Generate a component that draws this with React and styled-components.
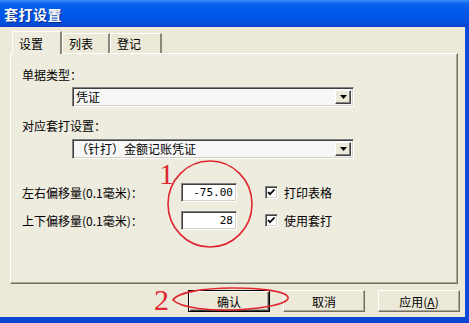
import React from "react";
import styled, { createGlobalStyle } from "styled-components";

const GlobalStyle = createGlobalStyle`
  html, body {
    margin: 0;
    padding: 0;
    background: #ECE9D8;
  }
  body {
    font-family: "Noto Sans CJK SC", "Liberation Sans", sans-serif;
    font-size: 12px;
    color: #000;
  }
`;

const Window = styled.div`
  position: relative;
  width: 469px;
  height: 323px;
  display: flex;
  flex-direction: column;
  overflow: hidden;
`;

const TitleBar = styled.div`
  flex: none;
  height: 27px;
  box-sizing: border-box;
  display: flex;
  align-items: center;
  padding-left: 4px;
  background: linear-gradient(
    to bottom,
    #3C8EF8 0%,
    #0D63EE 14%,
    #0058EA 45%,
    #0052E0 80%,
    #0A42C8 100%
  );
  color: #fff;
  font-weight: bold;
  font-size: 14px;
  letter-spacing: 0.5px;
  text-shadow: 1px 1px #0A2A8A;
`;

const Body = styled.div`
  flex: 1;
  display: flex;
  flex-direction: column;
  padding: 4px 7px 5px 10px;
  background: #ECE9D8;
  border-right: 4px solid #0B4ADB;
  border-bottom: 6px solid #0A46D4;
`;

const TabStrip = styled.div`
  display: flex;
  align-items: flex-end;
  height: 22px;
  padding-left: 2px;
  position: relative;
  z-index: 1;
`;

const Tab = styled.div`
  box-sizing: border-box;
  width: ${(p) => p.$w}px;
  height: ${(p) => (p.$active ? 23 : 20)}px;
  margin-bottom: ${(p) => (p.$active ? -1 : 0)}px;
  display: flex;
  align-items: center;
  padding-left: 6px;
  background: ${(p) => (p.$active ? "#EEEBDF" : "#ECE9D8")};
  border-left: 1px solid #fff;
  border-top: 1px solid #fff;
  border-right: 2px solid #8A877A;
`;

const Panel = styled.div`
  box-sizing: border-box;
  height: 231px;
  display: flex;
  flex-direction: column;
  padding: 14px 0 0 11px;
  background: #EEEBDF;
  border: 1px solid;
  border-color: #fff #716F64 #716F64 #fff;
  box-shadow: inset -1px -1px #ACA899;
`;

const Label = styled.div`
  height: 14px;
  line-height: 14px;
  margin-top: ${(p) => p.$mt || 0}px;
`;

const Combo = styled.div`
  box-sizing: border-box;
  width: 282px;
  height: 20px;
  margin: ${(p) => p.$mt}px 0 0 50px;
  display: flex;
  align-items: stretch;
  padding: 2px;
  background: #F7F7F7;
  border: 1px solid;
  border-color: #808080 #fff #fff #808080;
  box-shadow: inset 1px 1px #404040, inset -1px -1px #D4D0C8;
`;

const ComboText = styled.div`
  flex: 1;
  line-height: 14px;
  padding-left: 1px;
`;

const DropButton = styled.div`
  box-sizing: border-box;
  width: 16px;
  display: flex;
  align-items: center;
  justify-content: center;
  background: #ECE9D8;
  border: 1px solid;
  border-color: #fff #404040 #404040 #fff;
  box-shadow: inset -1px -1px #808080;
`;

const Row = styled.div`
  display: flex;
  align-items: center;
  height: 19px;
  margin-top: ${(p) => p.$mt}px;
`;

const RowLabel = styled.div`
  width: 159px;
  line-height: 14px;
`;

const NumBox = styled.div`
  box-sizing: border-box;
  width: 56px;
  height: 19px;
  padding: 0 3px 0 0;
  text-align: right;
  line-height: 17px;
  font-family: "DejaVu Sans Mono", "Liberation Mono", monospace;
  font-size: 11px;
  background: #fff;
  border: 1px solid;
  border-color: #808080 #fff #fff #808080;
  box-shadow: inset 1px 1px #404040, inset -1px -1px #D4D0C8;
`;

const CheckWrap = styled.div`
  display: flex;
  align-items: center;
  gap: 6px;
  margin-left: 28px;
`;

const CheckBox = styled.div`
  box-sizing: border-box;
  width: 13px;
  height: 13px;
  display: flex;
  align-items: center;
  justify-content: center;
  background: #fff;
  border: 1px solid;
  border-color: #808080 #fff #fff #808080;
  box-shadow: inset 1px 1px #404040, inset -1px -1px #D4D0C8;
`;

const ButtonRow = styled.div`
  display: flex;
  justify-content: flex-end;
  gap: 13px;
  margin: 6px -2px 0 0;
`;

const Button = styled.div`
  box-sizing: border-box;
  width: 82px;
  height: 22px;
  display: flex;
  align-items: center;
  justify-content: center;
  background: #ECE9D8;
  border: 1px solid;
  border-color: ${(p) => (p.$default ? "#000" : "#fff #716F64 #716F64 #fff")};
  box-shadow: ${(p) =>
    p.$default
      ? "inset 1px 1px #fff, inset -1px -1px #404040, inset -2px -2px #ACA899"
      : "inset -1px -1px #ACA899"};
`;

const Overlay = styled.svg`
  position: absolute;
  left: 0;
  top: 0;
  pointer-events: none;
`;

const Arrow = () => (
  <svg width="7" height="4" viewBox="0 0 7 4">
    <path d="M0 0h7L3.5 4z" fill="#000" />
  </svg>
);

const Tick = () => (
  <svg width="9" height="9" viewBox="0 0 9 9">
    <path d="M1 4l2 2.2L7.5 1.5" fill="none" stroke="#000" strokeWidth="1.8" />
  </svg>
);

const App = () => {
  return (
    <>
      <GlobalStyle />
      <Window>
        <TitleBar>套打设置</TitleBar>
        <Body>
          <TabStrip>
            <Tab $w={50} $active>设置</Tab>
            <Tab $w={48}>列表</Tab>
            <Tab $w={52}>登记</Tab>
          </TabStrip>
          <Panel>
            <Label>单据类型：</Label>
            <Combo $mt={5}>
              <ComboText>凭证</ComboText>
              <DropButton>
                <Arrow />
              </DropButton>
            </Combo>
            <Label $mt={12}>对应套打设置：</Label>
            <Combo $mt={6}>
              <ComboText>（针打）金额记账凭证</ComboText>
              <DropButton>
                <Arrow />
              </DropButton>
            </Combo>
            <Row $mt={24}>
              <RowLabel>左右偏移量(0.1毫米)：</RowLabel>
              <NumBox>-75.00</NumBox>
              <CheckWrap>
                <CheckBox>
                  <Tick />
                </CheckBox>
                打印表格
              </CheckWrap>
            </Row>
            <Row $mt={9}>
              <RowLabel>上下偏移量(0.1毫米)：</RowLabel>
              <NumBox>28</NumBox>
              <CheckWrap>
                <CheckBox>
                  <Tick />
                </CheckBox>
                使用套打
              </CheckWrap>
            </Row>
          </Panel>
          <ButtonRow>
            <Button $default>确认</Button>
            <Button>取消</Button>
            <Button>
              应用(<u>A</u>)
            </Button>
          </ButtonRow>
        </Body>
        <Overlay width="469" height="323">
          <ellipse cx="210" cy="204" rx="42" ry="43" fill="none" stroke="#E02630" strokeWidth="1.6" />
          <path
            d="M173 300 C182 284 282 285 288 297 C292 310 190 317 173 300 Z"
            fill="none"
            stroke="#E02630"
            strokeWidth="1.6"
          />
          <text x="159" y="184" fill="#E02630" fontSize="30" fontFamily="Liberation Serif, serif">1</text>
          <text x="154" y="310" fill="#E02630" fontSize="30" fontFamily="Liberation Serif, serif">2</text>
        </Overlay>
      </Window>
    </>
  );
};

export default App;
